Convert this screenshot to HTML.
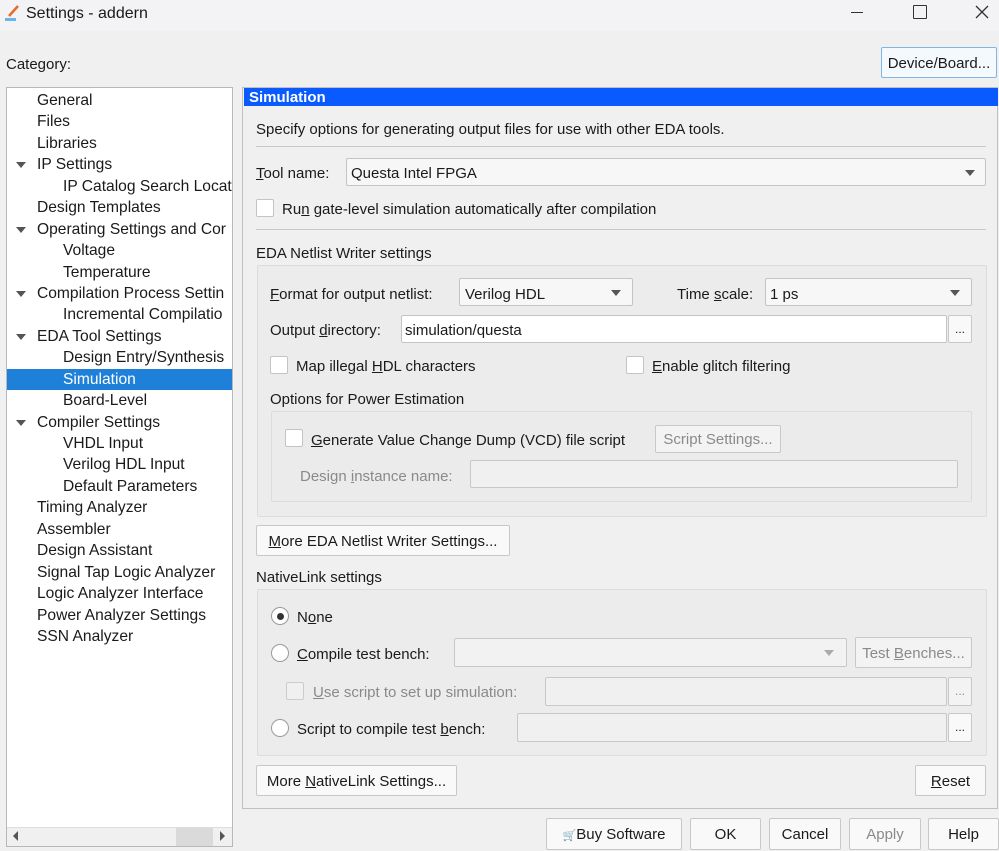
<!DOCTYPE html>
<html><head><meta charset="utf-8"><style>
*{box-sizing:border-box;margin:0;padding:0}
body{width:999px;height:850px;background:#f0f0f0;font-family:"Liberation Sans",sans-serif;font-size:15px;color:#1a1a1a;position:relative;overflow:hidden}
.a{position:absolute;white-space:nowrap;padding-top:2px}
svg.a{padding:0}
.btn{position:absolute;background:#f9f9f9;border:1px solid #c8c8c8;border-radius:2px;text-align:center;font-size:15px;padding-top:1px}
.cb{position:absolute;width:18px;height:18px;background:#fff;border:1px solid #c4c4c4;border-radius:2px}
.rb{position:absolute;width:18px;height:18px;background:#fff;border:1px solid #9a9a9a;border-radius:50%}
.inp{position:absolute;background:#fff;border:1px solid #c4c4c4;border-radius:2px}
.dis{position:absolute;background:#f0f0f0;border:1px solid #c8c8c8;border-radius:2px}
.grp{position:absolute;border:1px solid #dcdcdc;background:#ececec;border-radius:2px}
.arr{position:absolute;width:0;height:0;border-left:5px solid transparent;border-right:5px solid transparent;border-top:6px solid #555}
.tree div{height:21.44px;line-height:21.44px;white-space:nowrap;position:relative;font-size:15.6px}
.tri{position:absolute;left:9px;top:8px;width:0;height:0;border-left:5px solid transparent;border-right:5px solid transparent;border-top:6px solid #555}
u{text-decoration:underline}
.g{color:#8a8a8a}
</style></head><body>
<div class="a" style="left:0;top:0;width:999px;height:31px;background:#f3f3f6"></div>
<svg class="a" style="left:5px;top:4px" width="16" height="18"><path d="M4 12 L13 2" stroke="#e86a2a" stroke-width="2.5"/><rect x="0" y="14" width="11" height="3" fill="#6cb4e8"/></svg>
<div class="a" style="left:26px;top:3px;font-size:16px">Settings - addern</div>
<div class="a" style="left:851px;top:12px;width:12px;height:1px;background:#333;padding:0"></div>
<div class="a" style="left:913px;top:5px;width:14px;height:14px;border:1.5px solid #333;border-radius:1px;padding:0"></div>
<svg class="a" style="left:975px;top:5px" width="14" height="14"><path d="M1 1L13 13M13 1L1 13" stroke="#333" stroke-width="1.3"/></svg>

<div class="a" style="left:6px;top:54px">Category:</div>
<div class="btn" style="left:881px;top:47px;width:116px;height:31px;line-height:29px;border-color:#7fb6e6;background:#f4f9fe">Device/Board...</div>

<div class="a" style="left:6px;top:87px;width:227px;height:760px;background:#fff;border:1px solid #b8b8b8"></div>
<div class="a tree" style="left:7px;top:88px;width:225px">
<div style="padding-left:30px">General</div>
<div style="padding-left:30px">Files</div>
<div style="padding-left:30px">Libraries</div>
<div style="padding-left:30px"><span class="tri"></span>IP Settings</div>
<div style="padding-left:56px;overflow:hidden">IP Catalog Search Locat</div>
<div style="padding-left:30px">Design Templates</div>
<div style="padding-left:30px;overflow:hidden"><span class="tri"></span>Operating Settings and Cor</div>
<div style="padding-left:56px">Voltage</div>
<div style="padding-left:56px">Temperature</div>
<div style="padding-left:30px;overflow:hidden"><span class="tri"></span>Compilation Process Settin</div>
<div style="padding-left:56px;overflow:hidden">Incremental Compilatio</div>
<div style="padding-left:30px"><span class="tri"></span>EDA Tool Settings</div>
<div style="padding-left:56px;overflow:hidden">Design Entry/Synthesis</div>
<div style="padding-left:56px;background:#1f80d9;color:#fff">Simulation</div>
<div style="padding-left:56px">Board-Level</div>
<div style="padding-left:30px"><span class="tri"></span>Compiler Settings</div>
<div style="padding-left:56px">VHDL Input</div>
<div style="padding-left:56px">Verilog HDL Input</div>
<div style="padding-left:56px">Default Parameters</div>
<div style="padding-left:30px">Timing Analyzer</div>
<div style="padding-left:30px">Assembler</div>
<div style="padding-left:30px">Design Assistant</div>
<div style="padding-left:30px">Signal Tap Logic Analyzer</div>
<div style="padding-left:30px">Logic Analyzer Interface</div>
<div style="padding-left:30px">Power Analyzer Settings</div>
<div style="padding-left:30px">SSN Analyzer</div>
</div>
<div class="a" style="left:7px;top:827px;width:225px;height:19px;background:#f0f0f0;border-top:1px solid #ddd"></div>
<div class="a" style="left:176px;top:828px;width:37px;height:18px;background:#dadada"></div>
<svg class="a" style="left:12px;top:830px" width="8" height="14"><path d="M6 1L1 6L6 11Z" fill="#555"/></svg>
<svg class="a" style="left:219px;top:830px" width="8" height="14"><path d="M1 1L6 6L1 11Z" fill="#555"/></svg>

<div class="a" style="left:242px;top:87px;width:756px;height:722px;border:1px solid #c0c0c0;background:#f0f0f0"></div>
<div class="a" style="left:244px;top:88px;width:754px;height:18px;background:#0a5bff;color:#fff;font-weight:bold;line-height:18px;padding-left:5px;padding-top:1px">Simulation</div>
<div class="a" style="left:256px;top:119px">Specify options for generating output files for use with other EDA tools.</div>
<div class="a" style="left:256px;top:146px;width:730px;height:1px;background:#c8c8c8;padding:0"></div>

<div class="a" style="left:256px;top:163px"><u>T</u>ool name:</div>
<div class="inp" style="left:346px;top:158px;width:640px;height:28px;background:#f7f7f7"></div>
<div class="a" style="left:351px;top:163px">Questa Intel FPGA</div>
<div class="arr" style="left:965px;top:170px"></div>
<div class="cb" style="left:256px;top:199px"></div>
<div class="a" style="left:282px;top:199px">Ru<u>n</u> gate-level simulation automatically after compilation</div>
<div class="a" style="left:256px;top:229px;width:730px;height:1px;background:#c8c8c8;padding:0"></div>

<div class="a" style="left:256px;top:243px">EDA Netlist Writer settings</div>
<div class="grp" style="left:257px;top:265px;width:730px;height:252px"></div>
<div class="a" style="left:270px;top:284px"><u>F</u>ormat for output netlist:</div>
<div class="inp" style="left:459px;top:278px;width:174px;height:28px;background:#f7f7f7"></div>
<div class="a" style="left:465px;top:284px">Verilog HDL</div>
<div class="arr" style="left:611px;top:290px"></div>
<div class="a" style="left:677px;top:284px">Time <u>s</u>cale:</div>
<div class="inp" style="left:765px;top:278px;width:207px;height:28px;background:#f7f7f7"></div>
<div class="a" style="left:770px;top:284px">1 ps</div>
<div class="arr" style="left:950px;top:290px"></div>
<div class="a" style="left:270px;top:320px">Output <u>d</u>irectory:</div>
<div class="inp" style="left:401px;top:315px;width:546px;height:28px"></div>
<div class="a" style="left:405px;top:320px">simulation/questa</div>
<div class="btn" style="left:948px;top:315px;width:24px;height:28px;line-height:24px;font-size:12px">...</div>
<div class="cb" style="left:270px;top:356px"></div>
<div class="a" style="left:296px;top:356px">Map illegal <u>H</u>DL characters</div>
<div class="cb" style="left:626px;top:356px"></div>
<div class="a" style="left:652px;top:356px"><u>E</u>nable glitch filtering</div>
<div class="a" style="left:270px;top:389px">Options for Power Estimation</div>
<div class="grp" style="left:271px;top:411px;width:701px;height:91px;background:#ebebeb"></div>
<div class="cb" style="left:285px;top:429px"></div>
<div class="a" style="left:311px;top:430px"><u>G</u>enerate Value Change Dump (VCD) file script</div>
<div class="btn g" style="left:655px;top:425px;width:126px;height:28px;line-height:26px;background:#f3f3f3">Script Settings...</div>
<div class="a g" style="left:300px;top:466px">Design <u>i</u>nstance name:</div>
<div class="dis" style="left:470px;top:460px;width:488px;height:28px"></div>

<div class="btn" style="left:256px;top:525px;width:254px;height:31px;line-height:29px"><u>M</u>ore EDA Netlist Writer Settings...</div>

<div class="a" style="left:256px;top:567px">NativeLink settings</div>
<div class="grp" style="left:257px;top:589px;width:730px;height:167px"></div>
<div class="rb" style="left:271px;top:607px"></div><div class="a" style="left:277px;top:613px;width:7px;height:7px;border-radius:50%;background:#333;padding:0"></div>
<div class="a" style="left:297px;top:607px">N<u>o</u>ne</div>
<div class="rb" style="left:271px;top:644px"></div>
<div class="a" style="left:297px;top:644px"><u>C</u>ompile test bench:</div>
<div class="dis" style="left:454px;top:638px;width:393px;height:29px;background:#f2f2f2"></div>
<div class="arr" style="left:824px;top:650px;border-top-color:#aaa"></div>
<div class="btn g" style="left:855px;top:637px;width:117px;height:31px;line-height:29px;background:#f3f3f3">Test <u>B</u>enches...</div>
<div class="cb" style="left:286px;top:682px;background:#f0f0f0;border-color:#ccc"></div>
<div class="a g" style="left:313px;top:682px"><u>U</u>se script to set up simulation:</div>
<div class="dis" style="left:545px;top:677px;width:402px;height:29px"></div>
<div class="btn g" style="left:948px;top:677px;width:24px;height:29px;line-height:24px;font-size:12px;background:#f3f3f3">...</div>
<div class="rb" style="left:271px;top:719px"></div>
<div class="a" style="left:297px;top:719px">Script to compile test <u>b</u>ench:</div>
<div class="dis" style="left:517px;top:713px;width:430px;height:29px"></div>
<div class="btn" style="left:948px;top:713px;width:24px;height:29px;line-height:24px;font-size:12px">...</div>

<div class="btn" style="left:256px;top:765px;width:201px;height:31px;line-height:29px">More <u>N</u>ativeLink Settings...</div>
<div class="btn" style="left:915px;top:765px;width:71px;height:31px;line-height:29px"><u>R</u>eset</div>

<div class="btn" style="left:546px;top:818px;width:136px;height:32px;line-height:30px"><span style="color:#555;font-size:11px">&#128722;</span>Buy Software</div>
<div class="btn" style="left:690px;top:818px;width:71px;height:32px;line-height:30px">OK</div>
<div class="btn" style="left:769px;top:818px;width:72px;height:32px;line-height:30px">Cancel</div>
<div class="btn g" style="left:849px;top:818px;width:72px;height:32px;line-height:30px">Apply</div>
<div class="btn" style="left:928px;top:818px;width:71px;height:32px;line-height:30px">Help</div>
</body></html>
